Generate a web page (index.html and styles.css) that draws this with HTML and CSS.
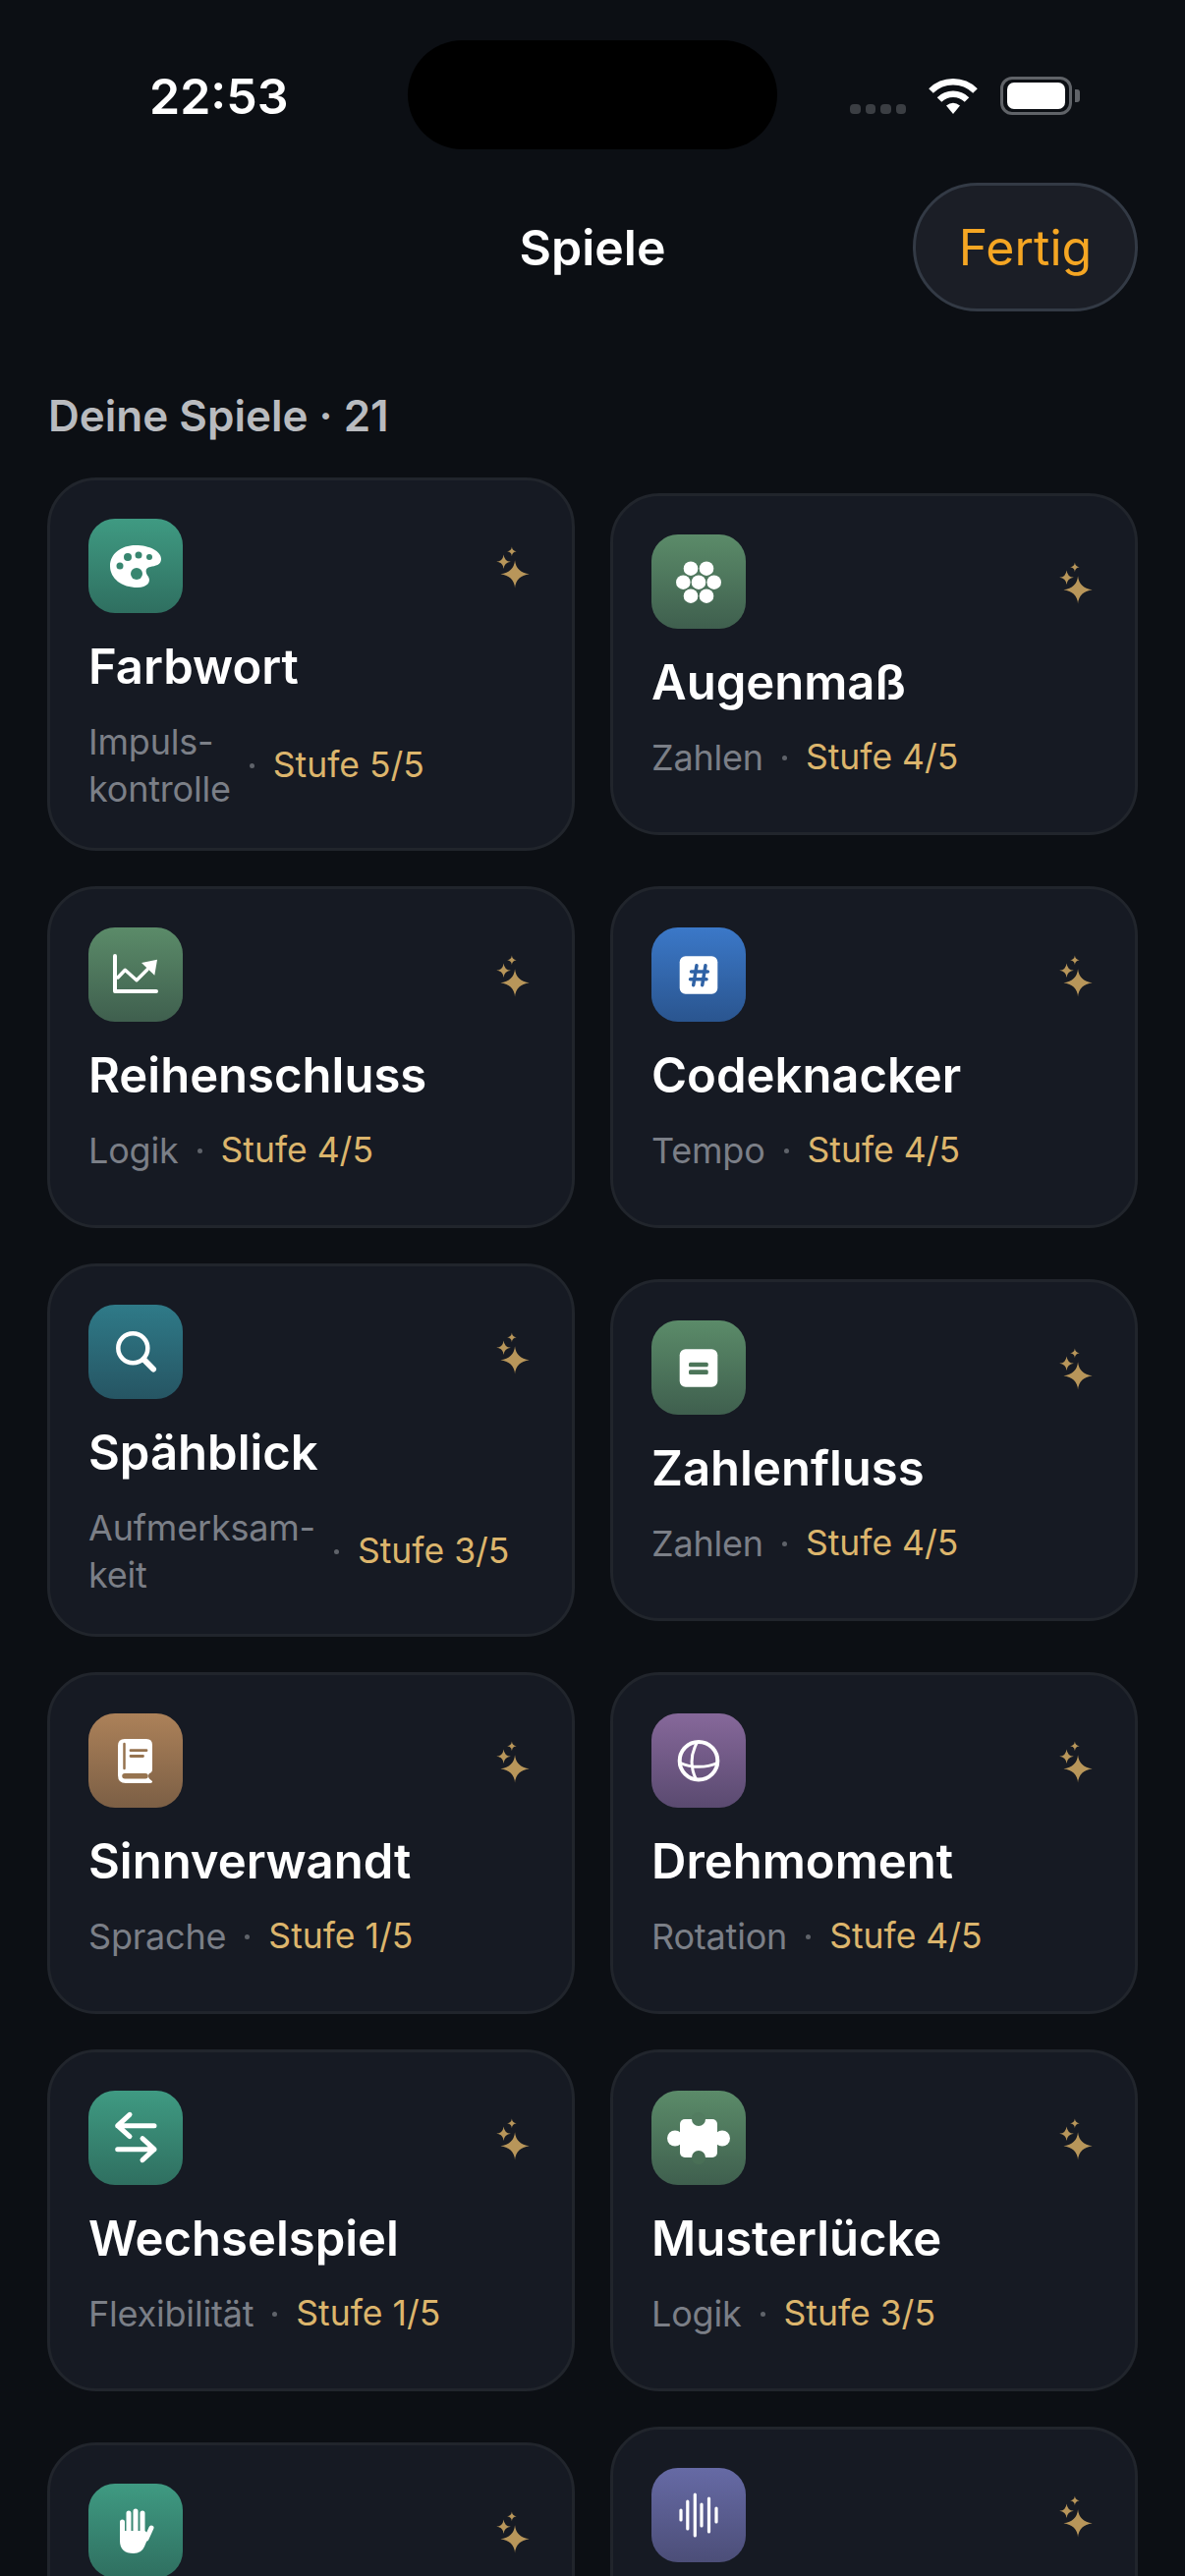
FILE: index.html
```html
<!DOCTYPE html>
<html lang="de">
<head>
  <meta charset="UTF-8">
  <meta name="viewport" content="width=device-width, initial-scale=1.0">
  <title>Spiele</title>
  <link rel="stylesheet" href="styles.css">
</head>
<body>
  <svg class="defs" width="0" height="0">
    <symbol id="sparkle" viewBox="0 0 36 42">
      <path d="M19 13.5Q20 25 33 27Q20 29 19 40.5Q18 29 5 27Q18 25 19 13.5Z"/>
      <path d="M8 8Q8.6 14.4 15 15Q8.6 15.6 8 22Q7.4 15.6 1 15Q7.4 14.4 8 8Z"/>
      <path d="M16 .5Q16.4 4.6 20.5 5Q16.4 5.4 16 9.5Q15.6 5.4 11.500 5Q15.6 4.6 16 .5Z"/>
    </symbol>
  </svg>

  <header class="status">
    <div class="time">22:53</div>
    <div class="island"></div>
    <div class="status-icons">
      <div class="signal"><i></i><i></i><i></i><i></i></div>
      <svg class="wifi" viewBox="0 0 50 37" fill="none" stroke="#fff" stroke-width="6.500">
        <path d="M2.500 13.500A32 32 0 0 1 47.500 13.500"/>
        <path d="M11 22.500A20 20 0 0 1 39 22.500"/>
        <path d="M18 28.500Q25 23 32 28.500L25 37Z" fill="#fff" stroke="none"/>
      </svg>
      <div class="battery"><div class="battery-level"></div></div>
      <div class="battery-nub"></div>
    </div>
  </header>

  <nav class="nav">
    <h1>Spiele</h1>
    <button class="done">Fertig</button>
  </nav>

  <h2 class="section-title">Deine Spiele · 21</h2>

  <main class="games">
    <article class="card">
      <div class="card-head">
        <div class="icon teal">
          <svg viewBox="0 0 96 96">
            <path fill="#fff" d="M48 27C62 27 74 33 74 41C74 47 68 48 63 49C57 50 58 55 61 59C64 64 60 70 50 70C34 70 22 61 22 48C22 36 33 27 48 27Z"/>
            <g fill="#388670">
              <circle cx="40" cy="39" r="4"/><circle cx="51" cy="37" r="3.500"/><circle cx="62" cy="39" r="3"/>
              <circle cx="32" cy="48" r="3.500"/><circle cx="49" cy="56" r="6"/>
            </g>
          </svg>
        </div>
        <svg class="sparkle"><use href="#sparkle"/></svg>
      </div>
      <h3>Farbwort</h3>
      <p class="sub sub-wrapped"><span class="topic">Impuls-<br>kontrolle</span><span class="dot"></span><span class="level">Stufe 5/5</span></p>
    </article>

    <article class="card">
      <div class="card-head">
        <div class="icon green">
          <svg viewBox="0 0 96 96" fill="#fff">
            <circle cx="40" cy="34.700" r="7.300"/><circle cx="56" cy="34.700" r="7.300"/>
            <circle cx="32.300" cy="48.700" r="7.300"/><circle cx="48" cy="48.700" r="7.300"/><circle cx="63.700" cy="48.700" r="7.300"/>
            <circle cx="40" cy="62.700" r="7.300"/><circle cx="56" cy="62.700" r="7.300"/>
          </svg>
        </div>
        <svg class="sparkle"><use href="#sparkle"/></svg>
      </div>
      <h3>Augenmaß</h3>
      <p class="sub"><span class="topic">Zahlen</span><span class="dot"></span><span class="level">Stufe 4/5</span></p>
    </article>

    <article class="card">
      <div class="card-head">
        <div class="icon green">
          <svg viewBox="0 0 96 96" fill="none" stroke="#fff" stroke-linecap="round" stroke-linejoin="round">
            <path stroke-width="4" d="M27 29V65H69"/>
            <path stroke-width="3.500" d="M30 51L37.300 43.300L49 53.700L60 42.700"/>
            <path fill="#fff" stroke="none" d="M54 36L70 32.700L67.300 48.700Z"/>
          </svg>
        </div>
        <svg class="sparkle"><use href="#sparkle"/></svg>
      </div>
      <h3>Reihenschluss</h3>
      <p class="sub"><span class="topic">Logik</span><span class="dot"></span><span class="level">Stufe 4/5</span></p>
    </article>

    <article class="card">
      <div class="card-head">
        <div class="icon blue">
          <svg viewBox="0 0 96 96">
            <rect x="28.700" y="29.300" width="38.600" height="38.400" rx="6" fill="#fff"/>
            <path fill="none" stroke="#2f62a5" stroke-width="3.500" stroke-linecap="round" d="M46 38.700L42.700 58.700M55 38.700L51.700 58.700M40.500 45H57.300M39.500 52.700H56"/>
          </svg>
        </div>
        <svg class="sparkle"><use href="#sparkle"/></svg>
      </div>
      <h3>Codeknacker</h3>
      <p class="sub"><span class="topic">Tempo</span><span class="dot"></span><span class="level">Stufe 4/5</span></p>
    </article>

    <article class="card">
      <div class="card-head">
        <div class="icon petrol">
          <svg viewBox="0 0 96 96" fill="none" stroke="#fff" stroke-linecap="round">
            <circle cx="45.300" cy="44.300" r="15" stroke-width="4.500"/>
            <path stroke-width="6" d="M56.300 55.700L66 65.500"/>
          </svg>
        </div>
        <svg class="sparkle"><use href="#sparkle"/></svg>
      </div>
      <h3>Spähblick</h3>
      <p class="sub sub-wrapped"><span class="topic">Aufmerksam-<br>keit</span><span class="dot"></span><span class="level">Stufe 3/5</span></p>
    </article>

    <article class="card">
      <div class="card-head">
        <div class="icon green">
          <svg viewBox="0 0 96 96">
            <rect x="28.700" y="29.300" width="38.600" height="38.400" rx="6" fill="#fff"/>
            <rect x="38" y="42.700" width="19.700" height="4.600" rx="1.500" fill="#4c7559"/>
            <rect x="38" y="50.300" width="19.700" height="4.600" rx="1.500" fill="#4c7559"/>
          </svg>
        </div>
        <svg class="sparkle"><use href="#sparkle"/></svg>
      </div>
      <h3>Zahlenfluss</h3>
      <p class="sub"><span class="topic">Zahlen</span><span class="dot"></span><span class="level">Stufe 4/5</span></p>
    </article>

    <article class="card">
      <div class="card-head">
        <div class="icon brown">
          <svg viewBox="0 0 96 96">
            <path fill="#fff" d="M37 26H59Q65 26 65 32V57Q65 60 62 61Q60 63.500 62 66.500L65 69Q65.500 71 63 71H38Q30 71 30 63V33Q30 26 37 26Z"/>
            <g fill="none" stroke="#96734f" stroke-linecap="round">
              <path stroke-width="2.500" d="M36.500 31V56"/>
              <path stroke-width="2.800" d="M43 37.700H59M43 43.500H55.500"/>
              <path stroke-width="5.500" d="M37 63.800H58"/>
            </g>
          </svg>
        </div>
        <svg class="sparkle"><use href="#sparkle"/></svg>
      </div>
      <h3>Sinnverwandt</h3>
      <p class="sub"><span class="topic">Sprache</span><span class="dot"></span><span class="level">Stufe 1/5</span></p>
    </article>

    <article class="card">
      <div class="card-head">
        <div class="icon purple">
          <svg viewBox="0 0 96 96" fill="none" stroke="#fff">
            <circle cx="48" cy="48.300" r="19.300" stroke-width="4"/>
            <path stroke-width="3" d="M46.500 29.500C39.500 42 39.500 55 45.500 67.500M29.500 50.500C40 55.500 56 55.500 67 50.500"/>
          </svg>
        </div>
        <svg class="sparkle"><use href="#sparkle"/></svg>
      </div>
      <h3>Drehmoment</h3>
      <p class="sub"><span class="topic">Rotation</span><span class="dot"></span><span class="level">Stufe 4/5</span></p>
    </article>

    <article class="card">
      <div class="card-head">
        <div class="icon teal">
          <svg viewBox="0 0 96 96" fill="none" stroke="#fff" stroke-width="5" stroke-linecap="round" stroke-linejoin="round">
            <path d="M67 35.700H29.700M42 24.300L29.700 35.700L42 46.700"/>
            <path d="M29.700 59.700H67M55 48.700L67 59.700L55 70.700"/>
          </svg>
        </div>
        <svg class="sparkle"><use href="#sparkle"/></svg>
      </div>
      <h3>Wechselspiel</h3>
      <p class="sub"><span class="topic">Flexibilität</span><span class="dot"></span><span class="level">Stufe 1/5</span></p>
    </article>

    <article class="card">
      <div class="card-head">
        <div class="icon green">
          <svg viewBox="0 0 96 96">
            <rect x="29" y="29" width="38" height="39" rx="5" fill="#fff"/>
            <circle cx="24" cy="48.500" r="8" fill="#fff"/>
            <circle cx="72" cy="48.500" r="8" fill="#fff"/>
            <circle cx="48" cy="29" r="7" fill="#527c60"/>
            <circle cx="48" cy="68" r="7" fill="#496f56"/>
          </svg>
        </div>
        <svg class="sparkle"><use href="#sparkle"/></svg>
      </div>
      <h3>Musterlücke</h3>
      <p class="sub"><span class="topic">Logik</span><span class="dot"></span><span class="level">Stufe 3/5</span></p>
    </article>

    <!-- last row runs off the bottom of the screen, only the heads show -->
    <article class="card card-short">
      <div class="card-head">
        <div class="icon teal">
          <svg viewBox="0 0 96 96" fill="none" stroke="#fff" stroke-linecap="round">
            <path stroke-width="5" d="M34.500 39V55M41 30V50M48 28V50M55 30V50"/>
            <path stroke-width="5" d="M59 56L64 45"/>
            <path fill="#fff" stroke="none" d="M32 48H57.500L62 52L57 64Q54 71 46 71Q32 71 32 58Z"/>
          </svg>
        </div>
        <svg class="sparkle"><use href="#sparkle"/></svg>
      </div>
    </article>

    <article class="card card-tall">
      <div class="card-head">
        <div class="icon indigo">
          <svg viewBox="0 0 96 96" fill="none" stroke="#fff" stroke-width="3.200" stroke-linecap="round">
            <path d="M30 43V53M36.800 34V62M44.300 27V69M51 37V59M58.500 31V65M66 41V55"/>
          </svg>
        </div>
        <svg class="sparkle"><use href="#sparkle"/></svg>
      </div>
    </article>
  </main>
</body>
</html>
```
FILE: styles.css
```css
* {
  box-sizing: border-box;
}
html, body {
  margin: 0;
  height: 2622px;
  overflow: hidden;
}
body {
  padding: 0 48px;
  background: #0c0f14;
  color: #fff;
  font-family: Inter, "Liberation Sans", sans-serif;
}
.defs {
  position: absolute;
}

/* status bar */
.status {
  display: grid;
  grid-template-columns: 367px 376px 1fr;
  height: 152px;
  padding-top: 41px;
}
.time {
  padding: 27px 0 0 104px;
  font-size: 50px;
  line-height: 60px;
  font-weight: 600;
}
.island {
  height: 111px;
  border-radius: 56px;
  background: #000;
}
.status-icons {
  display: flex;
  align-items: flex-start;
  padding: 37px 0 0 74px;
}
.signal {
  display: flex;
  gap: 5px;
  margin: 28px 23px 0 0;
}
.signal i {
  width: 10.500px;
  height: 10px;
  border-radius: 4px;
  background: #3b3e43;
}
.wifi {
  width: 50px;
  height: 37px;
  margin: 1px 23px 0 0;
}
.battery {
  width: 73px;
  height: 39px;
  padding: 3px 4px;
  border: 3px solid #606368;
  border-radius: 12px;
}
.battery-level {
  height: 100%;
  border-radius: 7px;
  background: #fff;
}
.battery-nub {
  width: 5px;
  height: 13px;
  margin: 13px 0 0 3px;
  border-radius: 0 3px 3px 0;
  background: #606368;
}

/* title row */
.nav {
  display: flex;
  justify-content: flex-end;
  align-items: center;
  height: 131px;
  margin-top: 34px;
}
.nav h1 {
  position: absolute;
  left: 0;
  right: 0;
  margin: 0;
  text-align: center;
  font-size: 50px;
  font-weight: 600;
}
.done {
  width: 229px;
  height: 131px;
  border: 3px solid #333a45;
  border-radius: 66px;
  background: #1b1e26;
  color: #f5a623;
  font-family: inherit;
  font-size: 50px;
  font-weight: 400;
}

.section-title {
  margin: 81px 0 38px 1px;
  color: #b9bbbf;
  font-size: 44px;
  line-height: 50px;
  font-weight: 600;
}

/* game cards */
.games {
  display: grid;
  grid-template-columns: 537px 537px;
  gap: 36px;
  align-items: center;
}
.card {
  padding: 39px 39px 36px;
  border: 3px solid #21252c;
  border-radius: 50px;
  background: #161a23;
}
.card-short {
  min-height: 348px;
}
.card-tall {
  min-height: 380px;
}
.card-head {
  display: flex;
  justify-content: space-between;
  align-items: center;
  padding-right: 1px;
}
.icon {
  width: 96px;
  height: 96px;
  border-radius: 27px;
}
.icon svg {
  display: block;
  width: 96px;
  height: 96px;
}
.teal { background: linear-gradient(#3f9a82, #2f6f60); }
.green { background: linear-gradient(#5b8b69, #3f5f4e); }
.blue { background: linear-gradient(#3b78c8, #2a558f); }
.petrol { background: linear-gradient(#2f7a88, #265563); }
.brown { background: linear-gradient(#ac8159, #7c5f45); }
.purple { background: linear-gradient(#86689a, #5a4a70); }
.indigo { background: linear-gradient(#666aa5, #4c4e78); }
.sparkle {
  width: 38px;
  height: 44px;
  margin-top: 3px;
  fill: #b8965a;
}
.card h3 {
  margin: 25px 0 22px;
  font-size: 49px;
  line-height: 60px;
  font-weight: 600;
}
.sub {
  display: flex;
  align-items: center;
  margin: 0 0 16px;
  font-size: 36px;
  line-height: 48px;
}
.sub-wrapped {
  margin-bottom: 0;
}
.topic {
  color: #7b7f87;
  letter-spacing: -0.2px;
}
.dot {
  width: 5px;
  height: 5px;
  margin: 0 19px;
  border-radius: 50%;
  background: #5f636a;
}
.level {
  color: #dcb56c;
  font-size: 35.500px;
}
```
